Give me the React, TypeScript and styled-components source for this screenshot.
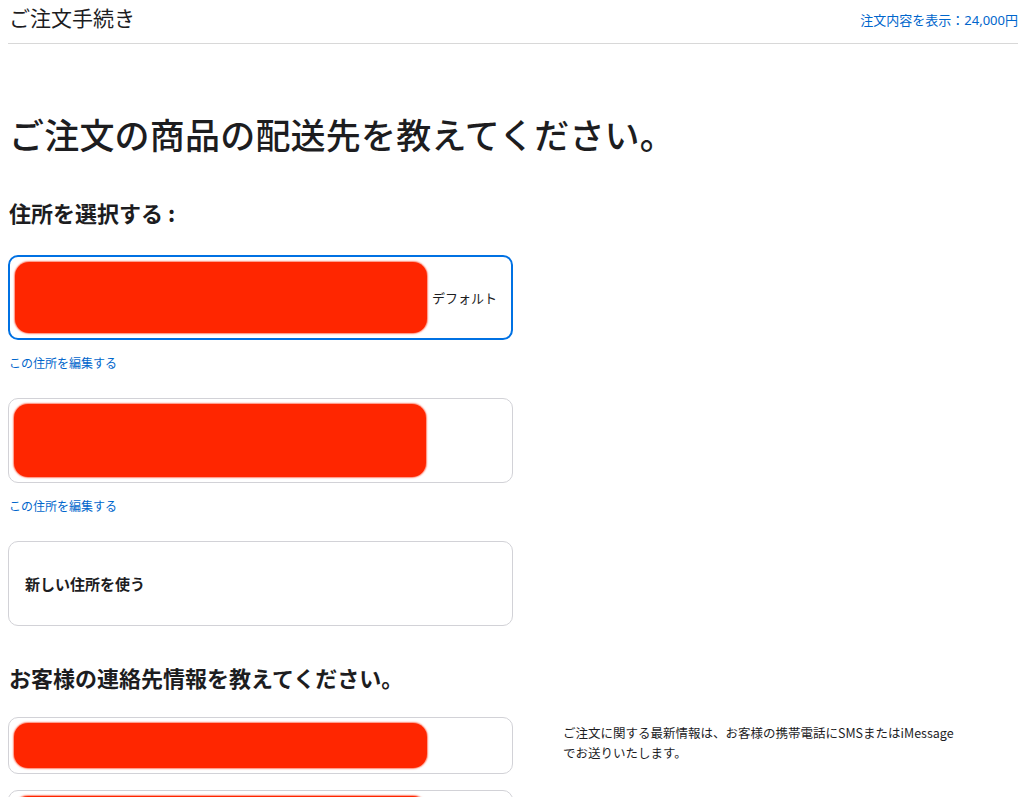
import React from 'react'
import styled, {createGlobalStyle} from 'styled-components'

const color = {
  text: '#1d1d1f',
  link: '#0066cc',
  blue: '#0071e3',
  border: '#d2d2d7',
  line: '#d8d8d8',
  redact: '#ff2600',
}

const GlobalStyle = createGlobalStyle`
  html, body {
    margin:0;
    padding:0;
    background:#fff;
  }
  body {
    font-family:"Noto Sans CJK JP","Noto Sans",sans-serif;
    color:${color.text};
  }
`

const Page = styled.div`
  padding:0 6px 0 8px;
`

const Header = styled.header`
  height:43px;
  border-bottom:1px solid ${color.line};
  display:flex;
  justify-content:space-between;
  align-items:flex-start;
`
const HeaderTitle = styled.div`
  font-size:21px;
  line-height:24px;
  padding-top:5px;
  padding-left:1px;
`
const SummaryLink = styled.a`
  font-family:"Noto Sans","Noto Sans CJK JP",sans-serif;
  font-size:13px;
  line-height:16px;
  margin-top:12px;
  color:${color.link};
  text-decoration:none;
`

const Title = styled.h1`
  margin:69px 0 0 1px;
  font-size:35px;
  line-height:41px;
  font-weight:500;
  letter-spacing:0.2px;
`
const SectionTitle = styled.h2<{$top:number}>`
  margin:${p=>p.$top}px 0 0 1px;
  font-size:22px;
  line-height:25px;
  font-weight:700;
`

const Stack = styled.div`
  margin-top:30px;
  width:505px;
  display:flex;
  flex-direction:column;
`

const Card = styled.div<{$selected?:boolean; $height:number}>`
  box-sizing:border-box;
  height:${p=>p.$height}px;
  border:${p=>p.$selected?`2px solid ${color.blue}`:`1px solid ${color.border}`};
  border-radius:10px;
  padding:${p=>p.$selected?'5px':'5px 6px 5px 5px'};
  display:flex;
  align-items:center;
  background:#fff;
`
const Redacted = styled.div<{$width:number}>`
  width:${p=>p.$width}px;
  align-self:stretch;
  background:${color.redact};
  border-radius:14px;
  box-shadow:0 0 1.5px 1px rgba(255,38,0,0.55);
`
const DefaultTag = styled.span`
  margin-left:5px;
  font-size:13px;
  line-height:18px;
`
const NewLabel = styled.span`
  padding-left:11px;
  font-size:15px;
  font-weight:700;
`
const EditLink = styled.a`
  display:block;
  margin:15px 0 27px 1px;
  font-size:12px;
  line-height:16px;
  color:${color.link};
  text-decoration:none;
`

const ContactRow = styled.div`
  margin-top:27px;
  display:grid;
  grid-template-columns:505px 1fr;
  column-gap:50px;
  align-items:start;
`
const ContactFields = styled.div`
  display:flex;
  flex-direction:column;
  gap:16px;
`
const Note = styled.p`
  margin:6px 0 0;
  font-size:12.5px;
  line-height:20px;
  max-width:400px;
`

const App = ()=>{
  return(
    <Page>
      <GlobalStyle/>
      <Header>
        <HeaderTitle>ご注文手続き</HeaderTitle>
        <SummaryLink href="#">注文内容を表示：24,000円</SummaryLink>
      </Header>

      <Title>ご注文の商品の配送先を教えてください。</Title>
      <SectionTitle $top={46}>住所を選択する :</SectionTitle>

      <Stack>
        <Card $selected $height={85}>
          <Redacted $width={412}/>
          <DefaultTag>デフォルト</DefaultTag>
        </Card>
        <EditLink href="#">この住所を編集する</EditLink>
        <Card $height={85}>
          <Redacted $width={412}/>
        </Card>
        <EditLink href="#">この住所を編集する</EditLink>
        <Card $height={85}>
          <NewLabel>新しい住所を使う</NewLabel>
        </Card>
      </Stack>

      <SectionTitle $top={39}>お客様の連絡先情報を教えてください。</SectionTitle>

      <ContactRow>
        <ContactFields>
          <Card $height={57}>
            <Redacted $width={413}/>
          </Card>
          <Card $height={57}>
            <Redacted $width={413}/>
          </Card>
        </ContactFields>
        <Note>ご注文に関する最新情報は、お客様の携帯電話にSMSまたはiMessageでお送りいたします。</Note>
      </ContactRow>
    </Page>
  )
}

export default App
